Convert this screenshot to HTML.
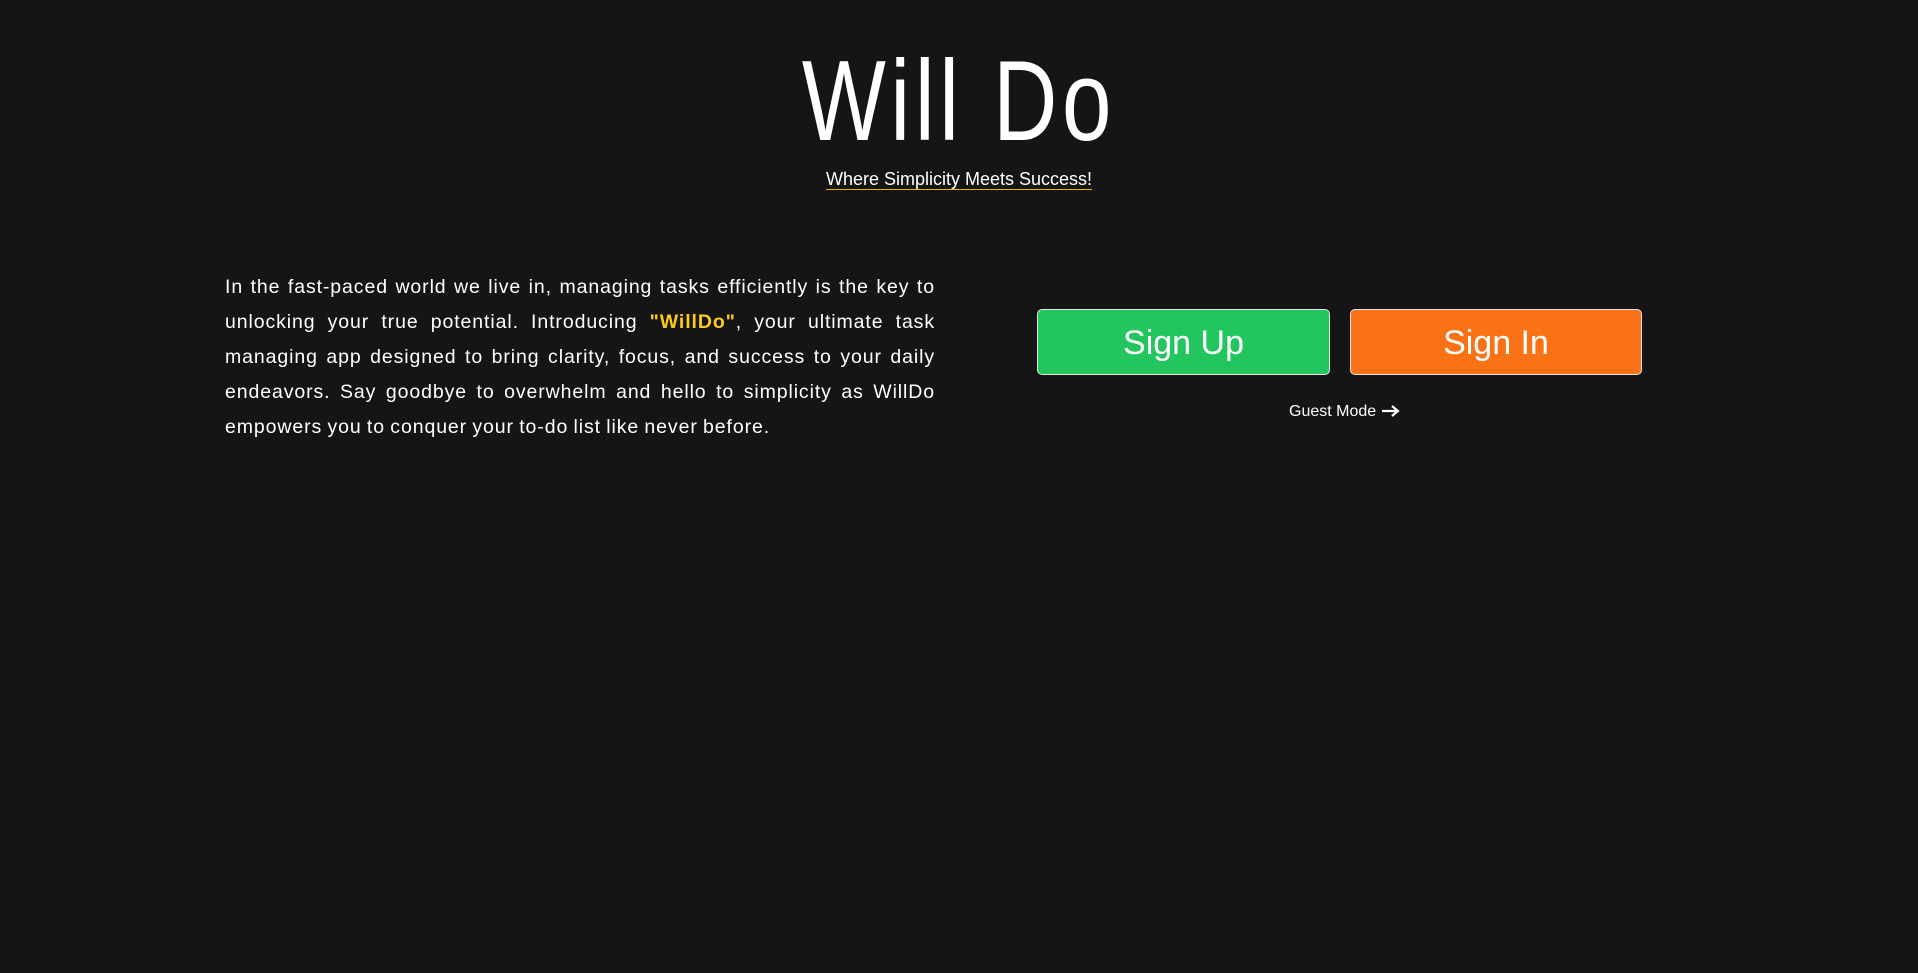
<!DOCTYPE html>
<html><head><style>
html,body{margin:0;padding:0;background:#151515;width:1918px;height:973px;overflow:hidden;color:#fff;font-family:"Liberation Sans",sans-serif}
.title{position:absolute;left:0;width:1918px;top:42px;text-align:center;font-size:114px;line-height:120px;font-family:"Liberation Sans Narrow","Liberation Sans",sans-serif;font-weight:300;letter-spacing:6px;transform:scaleX(0.78)}
.sub{position:absolute;left:0;width:1918px;top:169px;text-align:center;font-size:18px}
.sub span{border-bottom:1.5px solid #eab308}
.para{position:absolute;left:225px;top:270px;width:710px;font-size:19.5px;line-height:35px;text-align:justify;letter-spacing:0.9px;word-spacing:-1px}
.para b{color:#facc15}
.btn{position:absolute;top:309px;height:66px;border:1px solid #e5e5e5;border-radius:5px;color:#fff;font-size:34px;line-height:66px;text-align:center;box-sizing:border-box}
.guest{position:absolute;left:1289px;top:402px;font-size:16px;line-height:20px}
</style></head><body>
<div class="title">Will Do</div>
<div class="sub"><span>Where Simplicity Meets Success!</span></div>
<div class="para">In the fast-paced world we live in, managing tasks efficiently is the key to unlocking your true potential. Introducing <b>"WillDo"</b>, your ultimate task managing app designed to bring clarity, focus, and success to your daily endeavors. Say goodbye to overwhelm and hello to simplicity as WillDo empowers you to conquer your to-do list like never before.</div>
<div class="btn" style="left:1037px;width:293px;background:#22c55e">Sign Up</div>
<div class="btn" style="left:1350px;width:292px;background:#f97316">Sign In</div>
<div class="guest">Guest Mode <svg width="20" height="14" viewBox="0 0 20 14" style="vertical-align:-2px"><path d="M1 7H17M11 2L17 7L11 12" stroke="#fff" stroke-width="2.2" fill="none"/></svg></div>
</body></html>
